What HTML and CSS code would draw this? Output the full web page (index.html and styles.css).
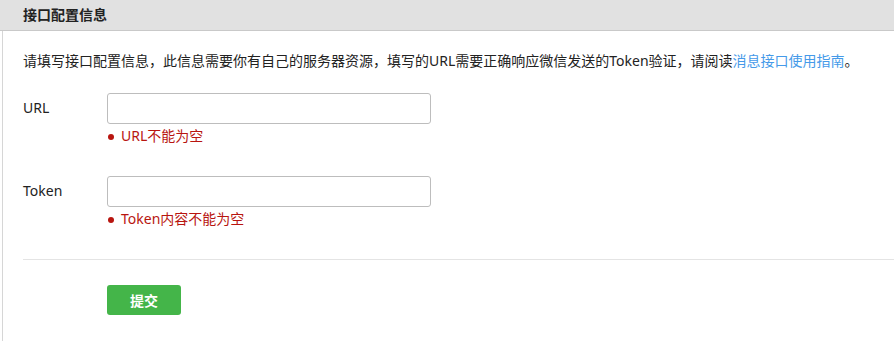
FILE: index.html
```html
<!DOCTYPE html>
<html lang="zh-CN">
<head>
  <meta charset="UTF-8">
  <title>接口配置信息</title>
  <link rel="stylesheet" href="styles.css">
</head>
<body>
  <div class="panel">
    <div class="panel-hd">接口配置信息</div>
    <div class="panel-bd">
      <p class="desc">请填写接口配置信息，此信息需要你有自己的服务器资源，填写的URL需要正确响应微信发送的Token验证，请阅读<a href="#">消息接口使用指南</a>。</p>
      <form class="cfg-form">
        <div class="row">
          <label class="row-label" for="url">URL</label>
          <div class="row-ctrl">
            <input type="text" id="url" class="ipt">
            <p class="err"><span class="dot"></span>URL不能为空</p>
          </div>
        </div>
        <div class="row">
          <label class="row-label" for="token">Token</label>
          <div class="row-ctrl">
            <input type="text" id="token" class="ipt">
            <p class="err"><span class="dot"></span>Token内容不能为空</p>
          </div>
        </div>
        <div class="actions">
          <button type="button" class="btn">提交</button>
        </div>
      </form>
    </div>
  </div>
</body>
</html>
```
FILE: styles.css
```css
body {
  margin: 0;
  font-family: "Noto Sans", "Noto Sans CJK SC", sans-serif;
  font-size: 14px;
  color: #222;
  background: #fff;
}
.panel-hd {
  height: 30px;
  line-height: 30px;
  padding-left: 23px;
  background: #e1e1e1;
  border-bottom: 1px solid #c9c9c9;
  font-weight: bold;
  color: #222;
}
.panel-bd {
  margin-left: 2px;
  border-left: 1px solid #d6d6d6;
  padding: 20px 0 30px 20px;
  height: 310px;
  box-sizing: border-box;
}
.desc {
  margin: 0;
  line-height: 20px;
}
.desc a {
  color: #459ae9;
  text-decoration: none;
}
.cfg-form {
  margin-top: 22px;
}
.row {
  display: flex;
  margin-bottom: 30px;
}
.row-label {
  width: 84px;
  line-height: 29px;
}
.ipt {
  display: block;
  width: 324px;
  height: 31px;
  box-sizing: border-box;
  border: 1px solid #bdbdbd;
  border-radius: 3px;
  margin: 0;
  padding: 4px 8px;
  font: inherit;
}
.err {
  margin: 2px 0 0;
  line-height: 20px;
  color: #b8150f;
  display: flex;
  align-items: center;
}
.dot {
  width: 6px;
  height: 6px;
  border-radius: 50%;
  background: #b8150f;
  margin: 1px 7px 0 1px;
}
.actions {
  border-top: 1px solid #e4e4e4;
  margin-top: 30px;
  padding: 25px 0 0 84px;
}
.btn {
  width: 74px;
  height: 30px;
  border: none;
  border-radius: 3px;
  background: #44b549;
  color: #fff;
  font: inherit;
  font-weight: bold;
  cursor: pointer;
}
```
